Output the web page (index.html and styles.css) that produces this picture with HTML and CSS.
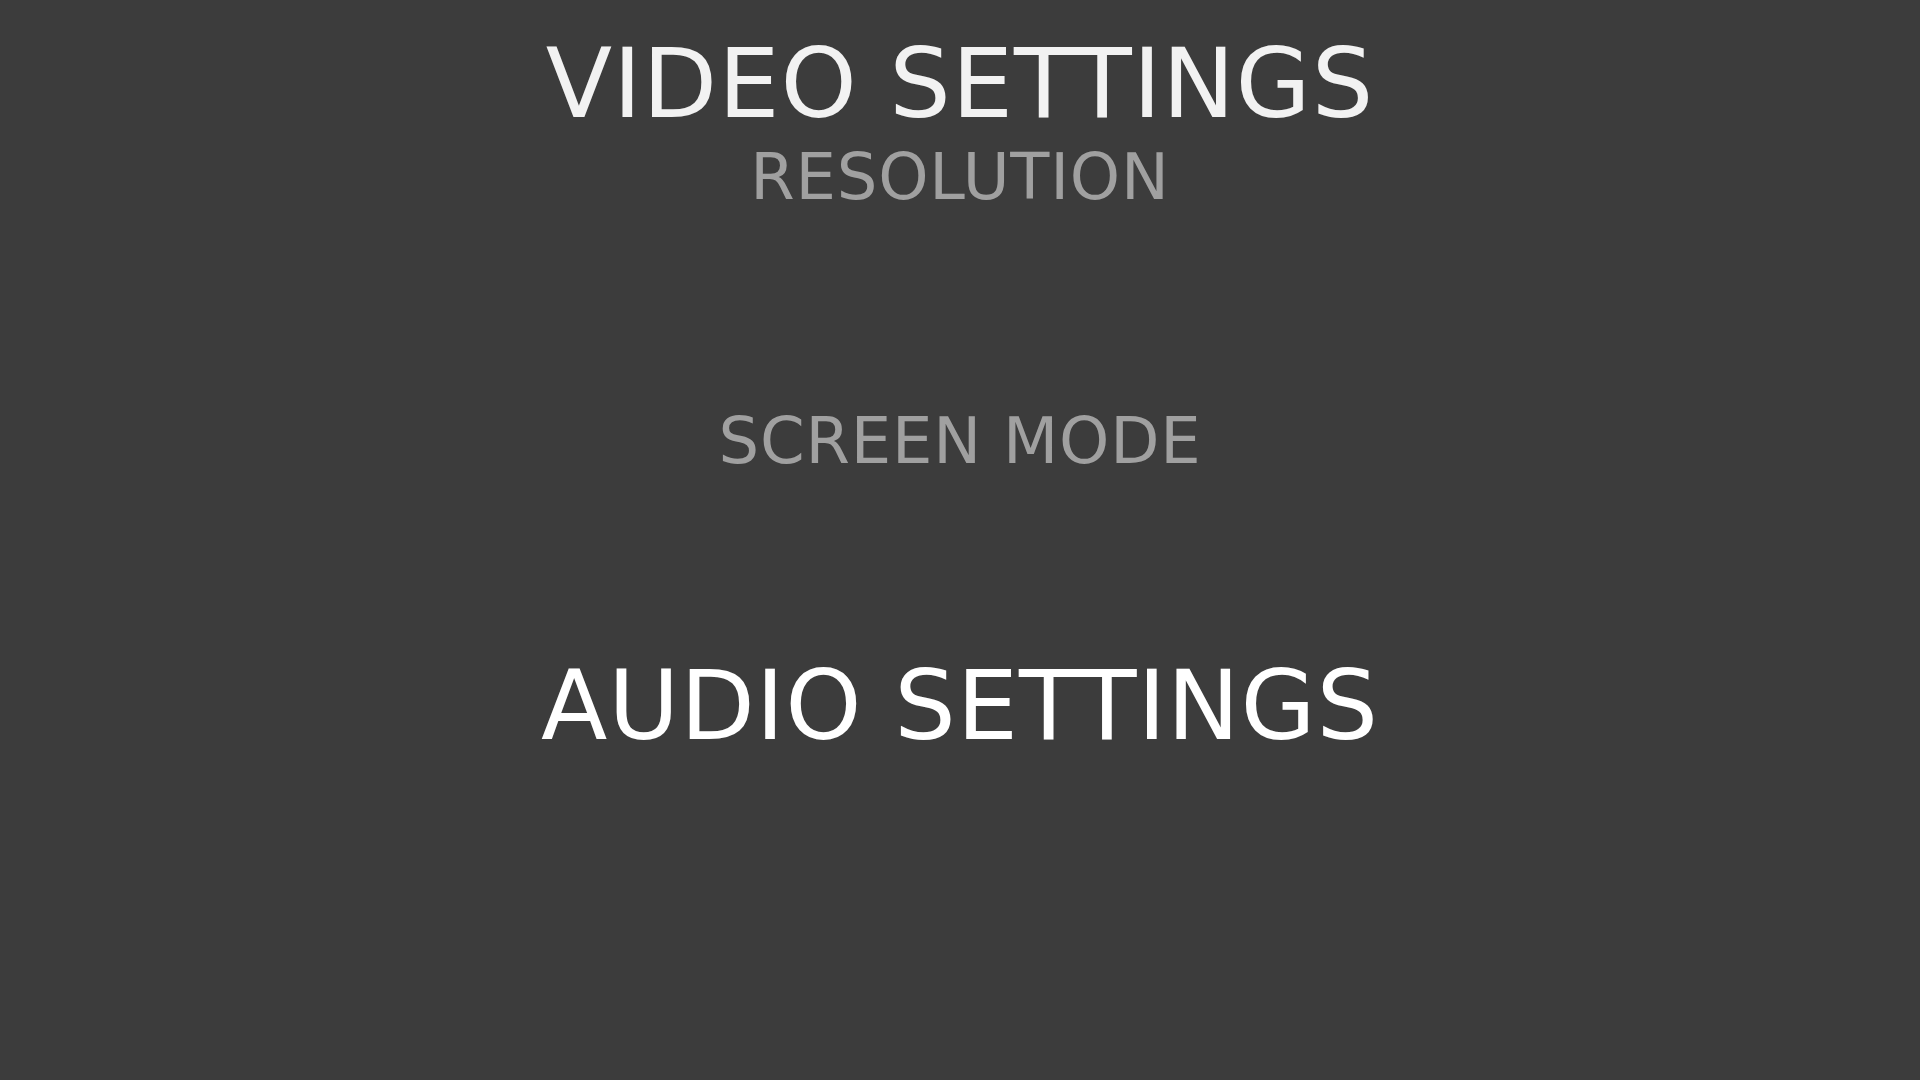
FILE: index.html
```html
<!DOCTYPE html>
<html lang="en">
<head>
<meta charset="utf-8">
<title>Settings</title>
<link rel="stylesheet" href="styles.css">
</head>
<body>
<main class="menu">
  <section class="group group-video">
    <h1 class="heading heading-video">VIDEO SETTINGS</h1>
    <div class="option option-resolution">
      <h2 class="label">RESOLUTION</h2>
      <div class="control"></div>
    </div>
    <div class="option option-screen">
      <h2 class="label">SCREEN MODE</h2>
      <div class="control control-screen"></div>
    </div>
  </section>
  <section class="group group-audio">
    <h1 class="heading heading-audio">AUDIO SETTINGS</h1>
  </section>
</main>
</body>
</html>
```
FILE: styles.css
```css
html, body {
  margin: 0;
  padding: 0;
  height: 100%;
}
body {
  background: #3c3c3c;
  font-family: "DejaVu Sans", "Verdana", sans-serif;
}
.menu {
  display: flex;
  flex-direction: column;
  align-items: center;
  padding-top: 27px;
}
.group {
  display: flex;
  flex-direction: column;
  align-items: center;
}
.heading {
  margin: 0;
  font-size: 97px;
  font-weight: normal;
  line-height: normal;
  letter-spacing: 0.9px;
}
.heading-video {
  color: #f2f2f2;
}
.heading-audio {
  color: #ffffff;
}
.option {
  display: flex;
  flex-direction: column;
  align-items: center;
}
.label {
  margin: 0;
  font-size: 64px;
  font-weight: normal;
  line-height: normal;
  letter-spacing: 0.8px;
  color: #a0a0a0;
}
.control {
  height: 190px;
}
.control-screen {
  height: 171px;
}
```
